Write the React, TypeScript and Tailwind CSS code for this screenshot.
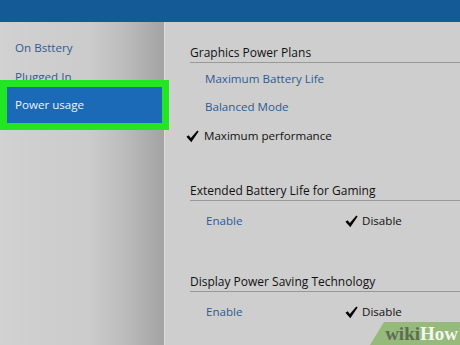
import React from "react";

const Check = ({ className = "" }: { className?: string }) => (
  <svg viewBox="0 0 14 14" className={className} width="13" height="13">
    <path d="M0.5 7.2 L2.9 5.6 L5.2 8.6 L12.2 0.6 L13.6 1.6 L5.7 13.2 Z" fill="#050505" />
  </svg>
);

const font = { fontFamily: '"Open Sans", "Noto Sans", sans-serif' };

export default function App() {
  return (
    <div className="relative w-[460px] h-[345px] overflow-hidden bg-[#cdcdcd] text-[11.6px]" style={font}>
      <div className="h-[22px] bg-[#145a97]" />
      <div className="flex h-[323px]">
        <div className="w-[164px] shrink-0 pt-[18px] bg-[linear-gradient(to_right,#d1d1d1_0%,#cbcbcb_55%,#bdbdbd_75%,#a3a3a3_100%)]">
          <div className="pl-[15px] leading-[16px] text-[#2f5b94]">On Bsttery</div>
          <div className="pl-[15px] mt-[13px] leading-[16px] text-[#2f5b94]">Plugged In</div>
          <div className="relative mt-[2px] ml-[7px] w-[155px] h-[36px] bg-[#1a6ab8] outline-[7px] outline-solid outline-[#22e622] flex items-center pl-[8px] text-[#eef4fb]">
            Power usage
          </div>
        </div>
        <div className="flex-1 pt-[23px] pl-[25px] bg-[#cecece] border-l border-[#dcdcdc] text-[#111]">
          <div className="leading-[16px] pb-[1px] border-b border-[#999] text-[12px]">Graphics Power Plans</div>
          <div className="mt-[8px] pl-[15px] leading-[16px] text-[#2f5b94]">Maximum Battery Life</div>
          <div className="mt-[12px] pl-[15px] leading-[16px] text-[#2f5b94]">Balanced Mode</div>
          <div className="mt-[13px] flex items-center leading-[16px]">
            <Check className="ml-[-4px] mr-[5px]" />
            <span>Maximum performance</span>
          </div>

          <div className="mt-[39px] leading-[16px] pb-[1px] border-b border-[#999] text-[12px]">Extended Battery Life for Gaming</div>
          <div className="mt-[12px] flex items-center leading-[16px]">
            <span className="w-[155px] pl-[16px] text-[#2f5b94]">Enable</span>
            <Check className="mr-[4px]" />
            <span>Disable</span>
          </div>

          <div className="mt-[45px] leading-[16px] pb-[1px] border-b border-[#999] text-[12px]">Display Power Saving Technology</div>
          <div className="mt-[12px] flex items-center leading-[16px]">
            <span className="w-[155px] pl-[16px] text-[#2f5b94]">Enable</span>
            <Check className="mr-[4px]" />
            <span>Disable</span>
          </div>
        </div>
      </div>
      <div className="absolute right-0 bottom-0 w-[90px] h-[23px] bg-[#96b97c] [clip-path:polygon(14px_0,100%_0,100%_100%,0_100%)] flex items-center justify-end pr-[2px] text-[19px] font-bold leading-none" style={{ fontFamily: '"Liberation Serif", serif' }}>
        <span className="text-[#5d6d52]">wiki</span>
        <span className="text-[#f3f6ef]">How</span>
      </div>
    </div>
  );
}
